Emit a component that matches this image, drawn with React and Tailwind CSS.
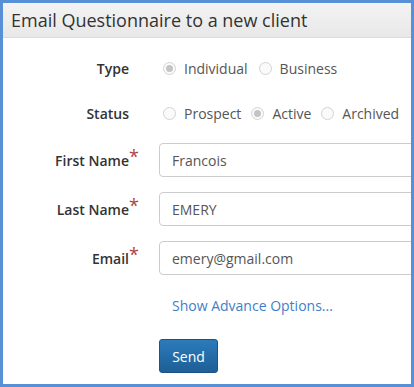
import React from "react";

function Radio({ checked, label }) {
  return (
    <label className="flex items-center">
      <span className="flex h-[13px] w-[13px] items-center justify-center rounded-full border border-[#d3d3d3] bg-[#fafafa]">
        {checked && <span className="h-[7px] w-[7px] rounded-full bg-[#c4c4c4]" />}
      </span>
      <span className="ml-[8px]">{label}</span>
    </label>
  );
}

function Label({ children, required }) {
  return (
    <div className="flex justify-end font-semibold text-[#333]">
      <span className="relative">
        {children}
        {required && (
          <span className="absolute left-full top-[-7px] text-[18px] font-normal text-[#b0433d]">*</span>
        )}
      </span>
    </div>
  );
}

function Field({ label, value }) {
  return (
    <div className="mt-[15px] grid h-[34px] grid-cols-[126px_1fr] items-center gap-x-[30px]">
      <Label required>{label}</Label>
      <div className="flex h-[34px] w-[300px] items-center rounded-[4px] border border-[#ccc] bg-white px-[12px] text-[#555]">
        {value}
      </div>
    </div>
  );
}

export default function App() {
  return (
    <div
      className="h-[387px] w-[414px] overflow-hidden border-[3px] border-[#5890d8] bg-white text-[14px]"
      style={{ fontFamily: '"Open Sans", sans-serif' }}
    >
      <div className="flex h-[35px] items-center border-b border-[#dcdcdc] bg-gradient-to-b from-[#f3f3f3] to-[#e8e8e8] pl-[8px] text-[18px] text-[#333]">
        Email Questionnaire to a new client
      </div>

      <div className="mt-[15px] grid h-[30px] grid-cols-[126px_1fr] items-center gap-x-[30px]">
        <Label>Type</Label>
        <div className="flex items-center gap-x-[11px] pl-[4px] text-[#555]">
          <Radio checked label="Individual" />
          <Radio label="Business" />
        </div>
      </div>

      <div className="mt-[15px] grid h-[30px] grid-cols-[126px_1fr] items-center gap-x-[30px]">
        <Label>Status</Label>
        <div className="flex items-center gap-x-[10px] whitespace-nowrap pl-[4px] text-[#555]">
          <Radio label="Prospect" />
          <Radio checked label="Active" />
          <Radio label="Archived" />
        </div>
      </div>

      <Field label="First Name" value="Francois" />
      <Field label="Last Name" value="EMERY" />
      <Field label="Email" value="emery@gmail.com" />

      <div className="mt-[20px] flex h-[20px] items-center pl-[169px] text-[#3f80c8]">
        Show Advance Options...
      </div>

      <div className="mt-[24px] pl-[156px]">
        <button className="h-[34px] w-[59px] rounded-[3px] border border-[#1b5384] bg-gradient-to-b from-[#2b7bbb] to-[#1e5f96] text-white">
          Send
        </button>
      </div>
    </div>
  );
}
